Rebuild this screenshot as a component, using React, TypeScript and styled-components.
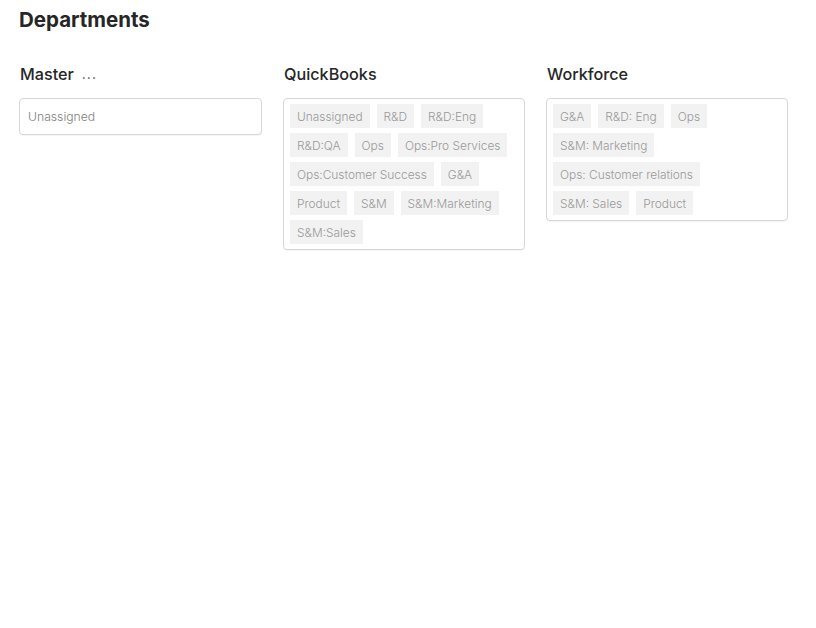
import React from "react";
import styled, { createGlobalStyle } from "styled-components";

const GlobalStyle = createGlobalStyle`
  html, body { margin: 0; padding: 0; background: #ffffff; }
  body { font-family: Inter, "Noto Sans", "Liberation Sans", sans-serif; }
`;

const Page = styled.div`
  width: 816px;
  height: 628px;
  box-sizing: border-box;
  padding: 7px 19px 0 19px;
  background: #ffffff;
`;

const Title = styled.h1`
  margin: 0;
  font-size: 20.5px;
  line-height: 25px;
  font-weight: 700;
  color: #262626;
`;

const Columns = styled.div`
  display: grid;
  grid-template-columns: 243px 242px 242px;
  column-gap: 21px;
  margin-top: 32px;
  align-items: start;
`;

const Column = styled.section`
  display: flex;
  flex-direction: column;
  gap: 14px;
`;

const Header = styled.div`
  display: flex;
  align-items: center;
  gap: 8px;
  font-size: 16.2px;
  line-height: 20px;
  font-weight: 500;
  color: #262626;
  padding-left: 1px;
`;

const More = styled.span`
  color: #555;
  font-weight: 400;
  font-size: 14px;
  letter-spacing: 1px;
`;

const Box = styled.div`
  box-sizing: border-box;
  border: 1px solid #d6d6d6;
  border-radius: 4px;
  background: #fff;
  padding: 5px 6px;
  display: flex;
  flex-wrap: wrap;
  gap: 5px 7px;
  box-shadow: 0 1px 1px rgba(0,0,0,0.04);
`;

const Placeholder = styled.div`
  font-size: 12.2px;
  line-height: 25px;
  color: #808080;
  padding-left: 2px;
  font-weight: 300;
`;

const Tag = styled.span`
  display: inline-flex;
  align-items: center;
  height: 24px;
  padding: 0 7px;
  background: #f2f2f2;
  color: #999999;
  font-size: 11.9px;
  font-weight: 300;
  white-space: nowrap;
`;

const quickbooks = [
  "Unassigned", "R&D", "R&D:Eng", "R&D:QA", "Ops", "Ops:Pro Services",
  "Ops:Customer Success", "G&A", "Product", "S&M", "S&M:Marketing", "S&M:Sales",
];

const workforce = [
  "G&A", "R&D: Eng", "Ops", "S&M: Marketing", "Ops: Customer relations", "S&M: Sales", "Product",
];

export default function App() {
  return (
    <Page>
      <GlobalStyle />
      <Title>Departments</Title>
      <Columns>
        <Column>
          <Header>Master <More>...</More></Header>
          <Box>
            <Placeholder>Unassigned</Placeholder>
          </Box>
        </Column>
        <Column>
          <Header>QuickBooks</Header>
          <Box>
            {quickbooks.map((t) => <Tag key={t}>{t}</Tag>)}
          </Box>
        </Column>
        <Column>
          <Header>Workforce</Header>
          <Box>
            {workforce.map((t) => <Tag key={t}>{t}</Tag>)}
          </Box>
        </Column>
      </Columns>
    </Page>
  );
}
